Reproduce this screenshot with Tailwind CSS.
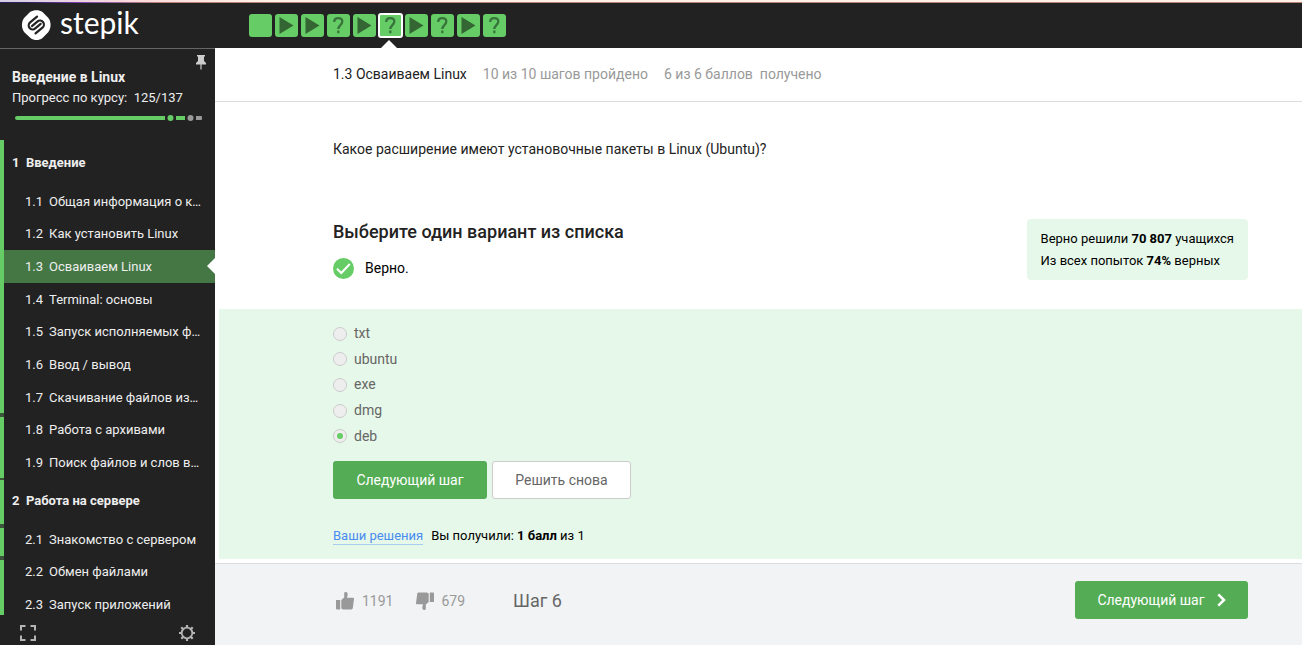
<!DOCTYPE html>
<html lang="ru">
<head>
<meta charset="utf-8">
<title>Осваиваем Linux — Stepik</title>
<script src="https://cdn.jsdelivr.net/npm/@tailwindcss/browser@4"></script>
</head>
<body class="flex h-screen flex-col overflow-hidden bg-white font-['Roboto','Liberation_Sans',sans-serif] text-[#222]">
<svg class="hidden">
  <symbol id="play" viewBox="0 0 23 23"><path d="M4.500 3v17l14-8.500z" fill="#336633"/></symbol>
  <symbol id="quiz" viewBox="0 0 23 23"><path d="M7.200 7.900C7.200 5.300 8.900 4.100 11.300 4.100c2.500 0 4 1.300 4 3.500 0 3.300-4 3.700-4 7.400M11.300 16.600v2.600" fill="none" stroke="#37743a" stroke-width="2.300"/></symbol>
</svg>

<header class="flex h-12 shrink-0 flex-col bg-[#222]">
  <div class="h-0.5 bg-linear-to-r from-[#d4cfe4] via-[#fbd9dc] via-10% to-[#fff1e8] to-20%"></div>
  <div class="h-px bg-linear-to-r from-[#2d1f5c] from-2% via-[#7a3fb5] via-6% to-[#b98476] to-12%"></div>
  <div class="flex flex-1">
    <a href="#" class="flex w-[249px] gap-2 pl-5" aria-label="Stepik">
      <svg class="mt-1.5 size-8" viewBox="0 0 32 32" aria-hidden="true">
        <path d="M16.500 1.200c2.300 0 4.300.6 6 1.900l5.700 5.700c3.200 3.900 3.200 10.500 0 14.400l-5.700 5.700c-3.600 2.800-8.400 2.800-12 0L4.300 23.200C1.200 19.300 1.200 12.700 4.300 8.800L10 3.100c1.900-1.300 4.200-1.900 6.500-1.900z" fill="#fff"/>
        <path d="M6 -6H-3A4 4 0 0 0 -3 2H4M-6 6H3A4 4 0 0 0 3 -2H-4" transform="translate(16.300 16) rotate(-40)" fill="none" stroke="#222" stroke-width="2.200" stroke-linecap="round"/>
      </svg>
      <span class="font-['Lato',sans-serif] text-[30px] leading-[39px] text-white">stepik</span>
    </a>
    <nav class="mt-[11px] flex h-[23px] gap-[3px]" aria-label="Шаги урока">
      <a href="#" class="size-[23px] rounded-[3px] bg-[#66cc66]" aria-label="Шаг 1"></a>
      <a href="#" class="size-[23px] rounded-[3px] bg-[#66cc66]" aria-label="Шаг 2"><svg class="size-full"><use href="#play"/></svg></a>
      <a href="#" class="size-[23px] rounded-[3px] bg-[#66cc66]" aria-label="Шаг 3"><svg class="size-full"><use href="#play"/></svg></a>
      <a href="#" class="size-[23px] rounded-[3px] bg-[#66cc66]" aria-label="Шаг 4"><svg class="size-full"><use href="#quiz"/></svg></a>
      <a href="#" class="size-[23px] rounded-[3px] bg-[#66cc66]" aria-label="Шаг 5"><svg class="size-full"><use href="#play"/></svg></a>
      <a href="#" class="relative size-[23px] rounded-[2px] bg-[#66cc66] outline-2 -outline-offset-1 outline-white" aria-label="Шаг 6"><svg class="size-full"><use href="#quiz"/></svg>
        <svg class="absolute top-[26px] left-0.5 h-2 w-4" viewBox="0 0 16 8" aria-hidden="true"><path d="M0 8l8-8 8 8z" fill="#fff"/></svg></a>
      <a href="#" class="size-[23px] rounded-[3px] bg-[#66cc66]" aria-label="Шаг 7"><svg class="size-full"><use href="#play"/></svg></a>
      <a href="#" class="size-[23px] rounded-[3px] bg-[#66cc66]" aria-label="Шаг 8"><svg class="size-full"><use href="#quiz"/></svg></a>
      <a href="#" class="size-[23px] rounded-[3px] bg-[#66cc66]" aria-label="Шаг 9"><svg class="size-full"><use href="#play"/></svg></a>
      <a href="#" class="size-[23px] rounded-[3px] bg-[#66cc66]" aria-label="Шаг 10"><svg class="size-full"><use href="#quiz"/></svg></a>
    </nav>
  </div>
</header>

<div class="flex min-h-0 flex-1">
  <aside class="flex w-[215px] shrink-0 flex-col border-t border-[#666] bg-[#222] text-[13px] text-[#eee]">
    <div class="h-[91px] shrink-0 pr-[9px] pl-3">
      <div class="flex justify-between">
        <h1 class="mt-[18px] text-[14px] leading-5 font-bold">Введение в Linux</h1>
        <button aria-label="Закрепить" class="mt-1.5 h-[15px] w-[10px]">
          <svg viewBox="0 0 10 15" class="block h-[15px] w-[10px]"><path d="M1 0h8v1.500H8V6l2 2v1.500H5.600V14.500H4.400V9.500H0V8l2-2V1.500H1z" fill="#ccc"/></svg>
        </button>
      </div>
      <p class="mt-px leading-5 whitespace-pre">Прогресс по курсу:  125/137</p>
      <svg class="mt-[7px] ml-[3px] h-1.5 w-[188px]" viewBox="0 0 188 6" aria-hidden="true">
        <path d="M2 1H150V5H2a2 2 0 0 1 0-4zM161 1h9v4h-9z" fill="#66cc66"/><circle cx="155.500" cy="3" r="3" fill="#66cc66"/>
        <circle cx="175.500" cy="3" r="3" fill="#999"/><path d="M181 1h5a1 1 0 0 1 1 1v2a1 1 0 0 1-1 1h-5z" fill="#999"/>
      </svg>
    </div>
    <div class="flex min-h-0 flex-1 overflow-hidden">
      <div class="flex w-1 shrink-0 flex-col bg-[#3a553a]" aria-hidden="true">
        <i class="h-[273px] bg-[#66cc66]"></i>
        <i class="mt-1 h-[61px] bg-[#66cc66]"></i>
        <i class="mt-0.5 h-11 bg-[#66cc66]"></i>
        <i class="mt-1 h-7 bg-[#66cc66]"></i>
        <i class="mt-1 flex-1 bg-[#66cc66]"></i>
      </div>
      <nav class="min-w-0 flex-1" aria-label="Содержание курса">
        <h2 class="h-[45px] pl-2 leading-[45px] font-bold whitespace-pre">1  Введение</h2>
        <ul class="grid h-[294px] auto-rows-fr grid-cols-1">
          <li class="flex items-center pr-3 pl-[21px]"><a href="#" class="flex min-w-0 gap-1.5"><span>1.1</span><span class="truncate">Общая информация о к…</span></a></li>
          <li class="flex items-center pr-3 pl-[21px]"><a href="#" class="flex min-w-0 gap-1.5"><span>1.2</span><span class="truncate">Как установить Linux</span></a></li>
          <li class="relative flex items-center bg-[#447744] pr-3 pl-[21px]"><a href="#" class="flex min-w-0 gap-1.5"><span>1.3</span><span class="truncate">Осваиваем Linux</span></a>
            <svg class="absolute top-2 right-0 h-4 w-2" viewBox="0 0 8 16" aria-hidden="true"><path d="M8 0v16L0 8z" fill="#fff"/></svg></li>
          <li class="flex items-center pr-3 pl-[21px]"><a href="#" class="flex min-w-0 gap-1.5"><span>1.4</span><span class="truncate">Terminal: основы</span></a></li>
          <li class="flex items-center pr-3 pl-[21px]"><a href="#" class="flex min-w-0 gap-1.5"><span>1.5</span><span class="truncate">Запуск исполняемых ф…</span></a></li>
          <li class="flex items-center pr-3 pl-[21px]"><a href="#" class="flex min-w-0 gap-1.5"><span>1.6</span><span class="truncate">Ввод / вывод</span></a></li>
          <li class="flex items-center pr-3 pl-[21px]"><a href="#" class="flex min-w-0 gap-1.5"><span>1.7</span><span class="truncate">Скачивание файлов из…</span></a></li>
          <li class="flex items-center pr-3 pl-[21px]"><a href="#" class="flex min-w-0 gap-1.5"><span>1.8</span><span class="truncate">Работа с архивами</span></a></li>
          <li class="flex items-center pr-3 pl-[21px]"><a href="#" class="flex min-w-0 gap-1.5"><span>1.9</span><span class="truncate">Поиск файлов и слов в…</span></a></li>
        </ul>
        <h2 class="h-11 pl-2 leading-[44px] font-bold whitespace-pre">2  Работа на сервере</h2>
        <ul class="grid h-[98px] auto-rows-fr grid-cols-1">
          <li class="flex items-center pr-3 pl-[21px]"><a href="#" class="flex min-w-0 gap-1.5"><span>2.1</span><span class="truncate">Знакомство с сервером</span></a></li>
          <li class="flex items-center pr-3 pl-[21px]"><a href="#" class="flex min-w-0 gap-1.5"><span>2.2</span><span class="truncate">Обмен файлами</span></a></li>
          <li class="flex items-center pr-3 pl-[21px]"><a href="#" class="flex min-w-0 gap-1.5"><span>2.3</span><span class="truncate">Запуск приложений</span></a></li>
        </ul>
      </nav>
    </div>
    <div class="flex h-[30px] shrink-0 items-center justify-between pt-1.5 pr-5 pl-5 text-[#b5b5b5]">
      <button aria-label="Во весь экран"><svg class="block size-4" viewBox="0 0 16 16" fill="none" stroke="currentColor" stroke-width="2"><path d="M1 5.500V1h4.500M10.500 1H15v4.500M15 10.500V15h-4.500M5.500 15H1v-4.500"/></svg></button>
      <button aria-label="Настройки"><svg class="block size-4" viewBox="0 0 16 16" fill="none" stroke="currentColor"><circle cx="8" cy="8" r="5.300" stroke-width="1.800"/><path d="M8 0v2.500M8 13.500V16M0 8h2.500M13.500 8H16M2.300 2.300l1.800 1.800M11.900 11.900l1.800 1.800M13.700 2.300l-1.800 1.800M4.100 11.900l-1.800 1.800" stroke-width="2.200"/></svg></button>
    </div>
  </aside>

  <main class="flex min-w-0 flex-1 flex-col">
    <div class="flex h-[54px] shrink-0 items-center gap-4 border-b border-[#ddd] pl-[118px] text-[14px] text-[#999]">
      <span class="text-[#222]">1.3 Осваиваем Linux</span><span>10 из 10 шагов пройдено</span><span class="whitespace-pre">6 из 6 баллов  получено</span>
    </div>
    <p class="mt-9 pl-[118px] text-[14px] leading-[22px]">Какое расширение имеют установочные пакеты в Linux (Ubuntu)?</p>

    <div class="mt-[59px] flex h-[90px] shrink-0 items-start justify-between pr-[54px] pl-[118px]">
      <div>
        <h2 class="text-[18px] leading-[26px] font-medium">Выберите один вариант из списка</h2>
        <p class="mt-3 flex items-center gap-[11px] text-[14px] leading-[22px] text-black">
          <svg class="size-[21px]" viewBox="0 0 21 21" aria-hidden="true"><circle cx="10.500" cy="10.500" r="10.500" fill="#66cc66"/><path d="M4 10.800l4.300 4.200 8.500-9" fill="none" stroke="#fff" stroke-width="2"/></svg>Верно.</p>
      </div>
      <div class="h-[61px] rounded bg-[#e6f8e9] px-3.5 pt-[9px] text-[13px] leading-[22px] text-black">
        <p>Верно решили <b>70 807</b> учащихся</p>
        <p>Из всех попыток <b>74%</b> верных</p>
      </div>
    </div>

    <form class="ml-1 h-[250px] shrink-0 bg-[#e6f8e9] pt-3 pl-[114px]">
      <fieldset class="grid h-[128px] auto-rows-fr text-[14px] text-[#666]">
        <label class="flex items-center gap-[7px]"><input type="radio" name="answer" disabled class="size-3.5 appearance-none rounded-full border border-[#ccc] bg-[#eee]">txt</label>
        <label class="flex items-center gap-[7px]"><input type="radio" name="answer" disabled class="size-3.5 appearance-none rounded-full border border-[#ccc] bg-[#eee]">ubuntu</label>
        <label class="flex items-center gap-[7px]"><input type="radio" name="answer" disabled class="size-3.5 appearance-none rounded-full border border-[#ccc] bg-[#eee]">exe</label>
        <label class="flex items-center gap-[7px]"><input type="radio" name="answer" disabled class="size-3.5 appearance-none rounded-full border border-[#ccc] bg-[#eee]">dmg</label>
        <label class="flex items-center gap-[7px]"><input type="radio" name="answer" disabled checked class="grid size-3.5 appearance-none place-items-center rounded-full border border-[#ccc] bg-[#eee] before:size-1.5 before:rounded-full before:bg-[#66cc66] before:content-['']">deb</label>
      </fieldset>
      <div class="mt-3 flex gap-[5px] text-[14px]">
        <button type="button" class="h-[38px] w-[154px] rounded-[3px] bg-[#54ad54] text-white">Следующий шаг</button>
        <button type="button" class="h-[38px] w-[139px] rounded-[3px] border border-[#ccc] bg-white text-[#666]">Решить снова</button>
      </div>
      <p class="mt-7 flex gap-2 text-[13px] leading-[17px] text-black"><a href="#" class="border-b border-[#a9cdf0] text-[#4a8cf0]">Ваши решения</a><span>Вы получили: <b>1 балл</b> из 1</span></p>
    </form>

    <footer class="mt-1 flex flex-1 items-start border-t border-[#ddd] bg-[#f2f3f5] pt-[17px] pr-[54px] pl-[121px]">
      <div class="flex h-[38px] flex-1 items-center pt-0.5 text-[14px] text-[#999]">
        <button class="flex items-center gap-2"><svg class="size-[18px]" viewBox="0 0 18 18" fill="currentColor"><path d="M0 8h4.200v9.500H1A1 1 0 0 1 0 16.500zM5.300 8 8.200 5.500V1.200C8.200.3 9 0 9.700 0c1.500 0 2 1 2 2.200 0 1.300-.5 2.400-.7 3.600h6.200c.5 0 .9.400.8 1l-1.200 9.300c-.1.800-.6 1.400-1.500 1.400H7.200l-1.900-1z"/></svg>1191</button>
        <button class="ml-[23px] flex items-center gap-[7px]"><svg class="size-[18px] rotate-180" viewBox="0 0 18 18" fill="currentColor"><path d="M0 8h4.200v9.500H1A1 1 0 0 1 0 16.500zM5.300 8 8.200 5.500V1.200C8.200.3 9 0 9.700 0c1.500 0 2 1 2 2.200 0 1.300-.5 2.400-.7 3.600h6.200c.5 0 .9.400.8 1l-1.200 9.300c-.1.800-.6 1.400-1.500 1.400H7.200l-1.900-1z"/></svg>679</button>
        <span class="ml-12 pb-0.5 text-[18px] text-[#666]">Шаг 6</span>
      </div>
      <button class="flex h-[38px] w-[173px] items-center justify-center gap-3 rounded-[3px] bg-[#54ad54] text-[14px] text-white">Следующий шаг<svg class="h-3.5 w-[9px]" viewBox="0 0 9 14" aria-hidden="true"><path d="M1.300 1.300 7 7l-5.700 5.700" fill="none" stroke="#fff" stroke-width="2.600"/></svg></button>
    </footer>
  </main>
</div>
</body>
</html>
